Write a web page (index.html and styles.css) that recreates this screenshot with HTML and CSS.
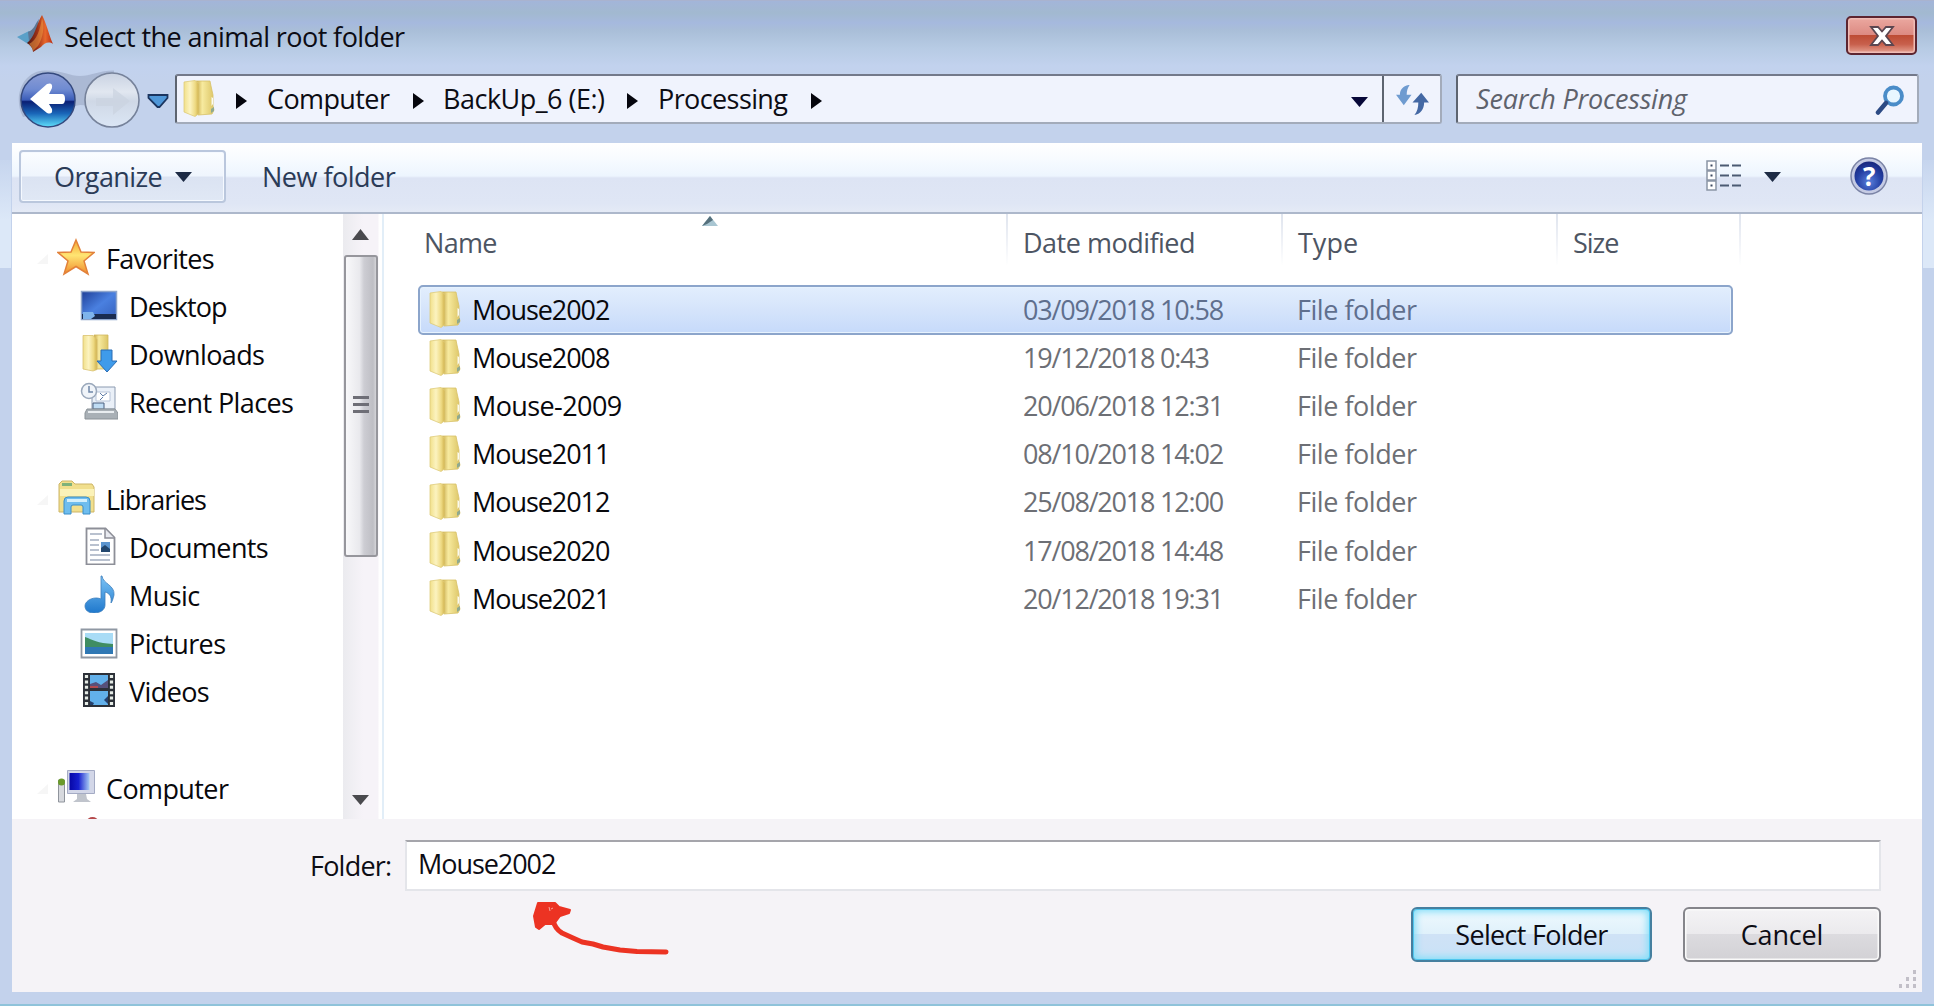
FILE: index.html
```html
<!DOCTYPE html>
<html lang="en">
<head>
<meta charset="utf-8">
<title>Select the animal root folder</title>
<link rel="stylesheet" href="styles.css">
</head>
<body>
<svg class="defs" width="0" height="0" aria-hidden="true">
  <defs>
    <linearGradient id="gLeaf" x1="0" x2="1"><stop offset="0" stop-color="#f1e08a"/><stop offset=".4" stop-color="#fcf3c0"/><stop offset=".75" stop-color="#eeda83"/><stop offset="1" stop-color="#cfb04c"/></linearGradient>
    <linearGradient id="gBack" x1="0" x2="1"><stop offset="0" stop-color="#c9a947"/><stop offset=".35" stop-color="#f7ea9f"/><stop offset="1" stop-color="#dcc566"/></linearGradient>
    <linearGradient id="gStar" x1="0" y1="0" x2="0" y2="1"><stop offset="0" stop-color="#f3a42e"/><stop offset=".45" stop-color="#ffe573"/><stop offset="1" stop-color="#f08c2c"/></linearGradient>
    <linearGradient id="gBlue" x1="0" y1="0" x2="1" y2="1"><stop offset="0" stop-color="#1e3f98"/><stop offset=".5" stop-color="#4a80e0"/><stop offset="1" stop-color="#3560bc"/></linearGradient>
    <linearGradient id="gSky" x1="0" y1="0" x2="0" y2="1"><stop offset="0" stop-color="#7cc4f6"/><stop offset="1" stop-color="#1f78cc"/></linearGradient>
    <linearGradient id="gOrb" x1="0" y1="0" x2="0" y2="1"><stop offset="0" stop-color="#8c9dd4"/><stop offset=".3" stop-color="#6f8bd2"/><stop offset=".5" stop-color="#3a5cb8"/><stop offset=".53" stop-color="#0a1f74"/><stop offset=".75" stop-color="#1a66b8"/><stop offset="1" stop-color="#5fe0fb"/></linearGradient>
    <linearGradient id="gOrbOff" x1="0" y1="0" x2="0" y2="1"><stop offset="0" stop-color="#c9d2e2"/><stop offset=".35" stop-color="#e1e7f0"/><stop offset=".52" stop-color="#cfd8e6"/><stop offset="1" stop-color="#dbe6f5"/></linearGradient>
    <linearGradient id="gScreen" x1="0" x2="1"><stop offset="0" stop-color="#0707a6"/><stop offset=".45" stop-color="#1720cf"/><stop offset="1" stop-color="#a9cdf4"/></linearGradient>
    <linearGradient id="gPeak" x1="0" x2="1"><stop offset="0" stop-color="#4f1712"/><stop offset=".4" stop-color="#9c3018"/><stop offset=".7" stop-color="#e8682c"/><stop offset="1" stop-color="#b92c12"/></linearGradient>
    <radialGradient id="gHelp" cx=".5" cy=".7" r=".7"><stop offset="0" stop-color="#5a80dc"/><stop offset=".6" stop-color="#2440a4"/><stop offset="1" stop-color="#18267c"/></radialGradient>
    <symbol id="folder" viewBox="0 0 34 38">
      <path d="M14 2h14l1 5 2 9v11l1 4-2 4-14 1z" fill="url(#gBack)" stroke="#d8c168" stroke-width=".8"/>
      <path d="M2 3 13 1.500l4 3v30l-4 3L2 33z" fill="url(#gLeaf)" stroke="#decb7b" stroke-width=".8"/>
      <path d="M29.500 18l1.500 1v6l-1.500 2z" fill="#fbfbf0"/><path d="M29 30l3-2v4l-3 2z" fill="#8fa98f"/>
    </symbol>
    <symbol id="expander" viewBox="0 0 14 12"><path d="M12 1v10H1z" fill="#f6f6f6"/></symbol>
    <symbol id="crumb" viewBox="0 0 11 16"><path d="M0 0 11 8 0 16z"/></symbol>
    <symbol id="drop" viewBox="0 0 17 10"><path d="M0 0h17L8.500 10z"/></symbol>
  </defs>
</svg>

<div class="window">
  <header class="titlebar">
    <svg class="app-icon" viewBox="0 0 38 38"><path d="M0 22 12 16l6 4-7 9z" fill="#5aa0c8"/><path d="M11 17c6-2 7-8 11-13l-3 16-7 6z" fill="#5d7594"/><path d="M10 28C18 22 19 10 25 0c4 7 7 20 11 29-4-3-9-1-12 3l-8 5c0-4-3-7-6-9z" fill="url(#gPeak)"/><path d="M25 3c3 8 1 20-4 28l-5 5c-1-4-2-5-4-7 8-4 11-14 13-26z" fill="#f4a043" opacity=".5"/></svg>
    <h1 class="title">Select the animal root folder</h1>
    <button class="close" aria-label="Close"><svg viewBox="0 0 26 22"><path d="M2 2h7l4 4.500 4-4.500h7l-7 9 7 9h-7l-4-4.500-4 4.500H2l7-9z" fill="#fff" stroke="#5b4650" stroke-width="1.800"/></svg></button>
  </header>

  <nav class="navbar">
    <svg class="orbs" viewBox="0 0 156 62">
      <path d="M30 1.500C48 1.500 55 7 65 7s20-5.500 34-5.500V40c-14 0-22-4-34-4L8 48C-2 30 6 2 30 1.500z" fill="#8d9cb8" opacity=".45"/>
      <circle cx="33" cy="31" r="27" fill="url(#gOrb)" stroke="#34497e" stroke-width="1.500"/>
      <path d="M15 30 32 15q6-2 5 4l-3 6h13q3 0 3 5t-3 5H34l3 5q1 6-5 4z" fill="#fff"/>
      <circle cx="97" cy="31" r="27" fill="url(#gOrbOff)" stroke="#76829a" stroke-width="1.600"/>
      <path d="M115 32 98 46v-9H81v-8h17V19z" fill="#cbd3df" opacity=".7"/>
      <path d="M133.500 26h19v3l-8 9h-2l-9-9z" fill="#4f97d8" stroke="#1b355f" stroke-width="1.800"/>
    </svg>
    <div class="address">
      <svg class="address-folder"><use href="#folder"/></svg>
      <svg class="crumb c1"><use href="#crumb"/></svg><span class="t-computer">Computer</span>
      <svg class="crumb c2"><use href="#crumb"/></svg><span class="t-drive">BackUp_6 (E:)</span>
      <svg class="crumb c3"><use href="#crumb"/></svg><span>Processing</span>
      <svg class="crumb c4"><use href="#crumb"/></svg>
      <svg class="drop address-drop"><use href="#drop"/></svg>
      <div class="refresh"><svg viewBox="0 0 34 32"><path d="M13 1c-6 1-9 5-9 10H0l8 11 8-11h-5c0-4 1-7 3-10z" fill="#6f9bd0"/><path d="M19 32c6-1 10-6 10-13h5L26 9l-9 10h6c0 5-1 9-4 13z" fill="#4468a4"/></svg></div>
    </div>
    <div class="search">
      <span class="placeholder">Search Processing</span>
      <svg class="lens" viewBox="0 0 30 30"><circle cx="18.500" cy="11" r="8.500" fill="#e8f6ff" stroke="#4a8cc8" stroke-width="3.800"/><path d="M11 18 3 27.500" stroke="#2c4a84" stroke-width="4.500" stroke-linecap="round"/></svg>
    </div>
  </nav>

  <div class="commands">
    <button class="organize">Organize<svg class="drop"><use href="#drop"/></svg></button>
    <span class="new-folder">New folder</span>
    <svg class="views" viewBox="0 0 35 32"><g fill="#fff" stroke="#8b95a5" stroke-width="1.500"><path d="M1 1h9v9H1zM1 11h9v9H1zM1 21h9v9H1z"/></g><path d="M4.500 4.500h2v2h-2zM4.500 14.500h2v2h-2zM4.500 24.500h2v2h-2z" fill="#3c4a60"/><path d="M14 5.500h9M26 5.500h9M14 15.500h9M26 15.500h9M14 25.500h9M26 25.500h9" stroke="#4b5a72" stroke-width="2.200"/></svg>
    <svg class="drop views-drop"><use href="#drop"/></svg>
    <div class="help"><svg viewBox="0 0 38 38"><circle cx="19" cy="19" r="18" fill="#c5cbe4" stroke="#7b84a6" stroke-width="1.500"/><circle cx="19" cy="19" r="14.500" fill="url(#gHelp)"/></svg><span>?</span></div>
  </div>

  <main class="body">
    <aside class="tree">
      <div class="node"><svg class="expander"><use href="#expander"/></svg><svg class="icon" viewBox="0 0 38 38"><path d="M19 2l5 12 13 .5-10 8.500 4 13-12-7.500L7 36l4-13L1 14.500 14 14z" fill="url(#gStar)" stroke="#e2813a" stroke-width="1.500"/></svg><span class="t-fav">Favorites</span></div>
      <div class="node child"><svg class="icon" viewBox="0 0 38 38"><path d="M1.500 5.500h35v28h-35z" fill="url(#gBlue)" stroke="#8fa6cc" stroke-width="1.500"/><path d="M2 28h34v5H2z" fill="#1a2c50"/><path d="M3 26h10l2 4-4 3H3z" fill="#7eb4ec"/></svg><span class="t-desk">Desktop</span></div>
      <div class="node child"><svg class="icon" viewBox="0 0 38 38"><path d="M14 1h14v34H14z" fill="url(#gBack)" stroke="#d2b75e" stroke-width=".8"/><path d="M3 1.500h10l4 4v30l-4 1.500-10-2z" fill="url(#gLeaf)" stroke="#d9c271" stroke-width=".8"/><path d="M21 16h11v11h5L27 38 17 27h4z" fill="#3f9bea" stroke="#2a6cb4"/></svg><span>Downloads</span></div>
      <div class="node child"><svg class="icon" viewBox="0 0 38 38"><path d="M12 5h23v22H12z" fill="#eaf0f8" stroke="#8b9ab0"/><path d="M16 10h14v9H16z" fill="#fff" stroke="#b7c4d8"/><path d="M20 11l3 3 4-3M20 18l3-3" stroke="#5b7ba6" fill="none"/><path d="M13 21h11v6H13z" fill="#bfdcf4" stroke="#4a5f7e"/><path d="M7 27h28l3 4v6H5v-6z" fill="#a9b0b6" stroke="#8b9298"/><path d="M8 30h26" stroke="#e9edf0" stroke-width="2"/><circle cx="9" cy="9" r="7.500" fill="#f0f4f9" stroke="#9aa8bb" stroke-width="1.500"/><path d="M9 4v6h4" fill="none" stroke="#6f87a8" stroke-width="1.500"/></svg><span>Recent Places</span></div>
      <div class="node gap"></div>
      <div class="node"><svg class="expander"><use href="#expander"/></svg><svg class="icon" viewBox="0 0 38 38"><path d="M2 5l3-3h10l3 3h17l2 3v25H2z" fill="#f1df8d" stroke="#cdb566"/><path d="M5 4h10v3H5z" fill="#7fb27a"/><path d="M3 10h34v7H3z" fill="#fbf2b8"/><path d="M7 35V22q0-4 4-4h18q4 0 4 4v13h-7v-7q0-2-2-2h-8q-2 0-2 2v7z" fill="#6fbdee" stroke="#3b8ec8"/><path d="M10 20h20v3H10z" fill="#d3effc"/></svg><span class="t-lib">Libraries</span></div>
      <div class="node child"><svg class="icon" viewBox="0 0 38 38"><path d="M6.500 1.500h19l9 9v27h-28z" fill="#fff" stroke="#8d8f98" stroke-width="1.800"/><path d="M25 2v9h9" fill="#e8eaf0" stroke="#8d8f98" stroke-width="1.500"/><path d="M10 7h12M10 13h9M10 18h9M10 23h9M10 28h20M10 33h20" stroke="#a3adc0" stroke-width="1.600"/><path d="M21 15h9v10h-9z" fill="#5c95cf"/><path d="M21 21l4-3 5 4v3h-9z" fill="#23476e"/></svg><span>Documents</span></div>
      <div class="node child"><svg class="icon" viewBox="0 0 38 38"><path d="M22 1c1 8 13 9 12 19-1 4-2 7-3 8 1-7-2-10-6-11v13c0 5-5 8-11 8S5 35 5 31s5-8 11-8c2 0 4 .5 5 1V1z" fill="url(#gSky)" stroke="#3d7fbd" stroke-width=".8"/></svg><span>Music</span></div>
      <div class="node child"><svg class="icon" viewBox="0 0 38 38"><path d="M1.500 6.500h35v28h-35z" fill="#fff" stroke="#8f98a3" stroke-width="1.800"/><path d="M5 10h28v21H5z" fill="#a9dcf6"/><path d="M5 14c8 3 12 6 28 7v4H5z" fill="#3f8d62"/><path d="M5 24h28v7H5z" fill="#2f78b4"/></svg><span>Pictures</span></div>
      <div class="node child"><svg class="icon" viewBox="0 0 38 38"><path d="M3 2h32v34H3z" fill="#2c3038"/><path d="M10 4h18v13H10zM10 20h18v14H10z" fill="#62b0ea"/><path d="M10 13l6-2 5 3 7-5v8H10z" fill="#56507a"/><path d="M10 15h8v2h-8z" fill="#b04a50"/><path d="M10 30l4 2-1 2h-3zM28 25l-4 4 4 4z" fill="#24406e"/><path d="M6.500 4v32M31.500 4v32" stroke="#e6ece6" stroke-width="3.200" stroke-dasharray="3 2.400"/></svg><span>Videos</span></div>
      <div class="node gap"></div>
      <div class="node"><svg class="expander"><use href="#expander"/></svg><svg class="icon" viewBox="0 0 38 38"><path d="M10.500 2.500h27v23h-27z" fill="#d3d7e8" stroke="#a4abc4"/><path d="M12.500 5h20v17h-20z" fill="url(#gScreen)"/><path d="M20 26h9l1 5 4 3H16l4-3z" fill="#c0c4cc"/><path d="M1.500 12h6v22h-6z" fill="#d7d9de" stroke="#8f949c"/><circle cx="4.500" cy="14" r="3.500" fill="#6a9a2a"/></svg><span>Computer</span></div>
      <div class="node child"><svg class="icon" viewBox="0 0 38 38"><ellipse cx="12.500" cy="5" rx="5.500" ry="4" fill="#b5494b"/></svg></div>
    </aside>
    <div class="scrollbar">
      <svg class="up" viewBox="0 0 17 11"><path d="M0 11 8.500 0 17 11z" fill="#4a4a4e"/></svg>
      <div class="thumb"><i></i><i></i><i></i></div>
      <svg class="down" viewBox="0 0 17 10"><path d="M0 0h17L8.500 10z" fill="#4a4a4e"/></svg>
    </div>
    <section class="files">
      <div class="row head"><span class="name">Name</span><span>Date modified</span><span class="type">Type</span><span class="size">Size</span><svg class="sort" viewBox="0 0 16 10"><path d="M0 10 8 0l8 10z" fill="#a9c6d2"/><path d="M0 10 8 0l3 4-6 4z" fill="#55707c"/></svg></div>
      <div class="row selected"><svg class="file-icon"><use href="#folder"/></svg><span class="name">Mouse2002</span><span class="date">03/09/2018 10:58</span><span class="kind">File folder</span></div>
      <div class="row"><svg class="file-icon"><use href="#folder"/></svg><span class="name">Mouse2008</span><span class="date">19/12/2018 0:43</span><span class="kind">File folder</span></div>
      <div class="row"><svg class="file-icon"><use href="#folder"/></svg><span class="name dashed">Mouse-2009</span><span class="date">20/06/2018 12:31</span><span class="kind">File folder</span></div>
      <div class="row"><svg class="file-icon"><use href="#folder"/></svg><span class="name">Mouse2011</span><span class="date">08/10/2018 14:02</span><span class="kind">File folder</span></div>
      <div class="row"><svg class="file-icon"><use href="#folder"/></svg><span class="name">Mouse2012</span><span class="date">25/08/2018 12:00</span><span class="kind">File folder</span></div>
      <div class="row"><svg class="file-icon"><use href="#folder"/></svg><span class="name">Mouse2020</span><span class="date">17/08/2018 14:48</span><span class="kind">File folder</span></div>
      <div class="row"><svg class="file-icon"><use href="#folder"/></svg><span class="name">Mouse2021</span><span class="date">20/12/2018 19:31</span><span class="kind">File folder</span></div>
    </section>
  </main>

  <footer class="footer">
    <div class="field"><label class="label">Folder:</label><div class="input">Mouse2002</div></div>
    <div class="actions"><button class="btn primary">Select Folder</button><button class="btn cancel">Cancel</button></div>
    <svg class="pointer" viewBox="0 0 140 54"><path d="M22 24C23 29 26 34 31 37L42 42 51 46 62 48 72 51 89 54 106 55.500 135 56" transform="translate(0 -4)" fill="none" stroke="#ec3323" stroke-width="5" stroke-linecap="round" stroke-linejoin="round"/><path d="M7 3 24 3 28 7 39 10 38 13 29 16 23 24 14 24 8 29 5 27 3 16z" fill="#ec3323" stroke="#ec3323" stroke-width="2" stroke-linejoin="round"/><path d="M18 7l1 4M22 8l-2 1" stroke="#f6a49c"/></svg>
    <svg class="grip" viewBox="0 0 20 20"><path d="M15 0h3v4h-3zM8 7h3v4H8zM15 7h3v4h-3zM1 14h3v4H1zM8 14h3v4H8zM15 14h3v4h-3z" fill="#c2bfc8"/></svg>
  </footer>
</div>
</body>
</html>
```
FILE: styles.css
```css
* { box-sizing: border-box; }

body {
  margin: 0;
  font: 27px/1 "Open Sans", "Noto Sans", sans-serif;
  letter-spacing: -0.6px;
  color: #0c0c14;
}

svg { display: block; flex: none; }
span, label, h1 { white-space: nowrap; }
button { font: inherit; letter-spacing: inherit; color: inherit; padding: 0; }
.defs { position: absolute; }

.window {
  display: flex;
  flex-direction: column;
  width: 1934px;
  height: 1006px;
  padding: 0 12px 14px;
  background:
    linear-gradient(#a9b3cf, #a9b3cf) 0 0 / 100% 1px no-repeat,
    linear-gradient(#8fc3da, #8fc3da) 0 100% / 100% 2px no-repeat,
    linear-gradient(#c6d5ee, #dce8f8 60px, #dce8f8) 0 160px / 11px 108px no-repeat,
    linear-gradient(#c6d5ee, #dce8f8 60px, #dce8f8) 100% 160px / 11px 108px no-repeat,
    linear-gradient(#a3b5da 0, #a2b9d0 13px, #a6b9de 23px, #a9bed8 30px, #b7cbe4 48px, #c2d2ee 66px, #c3d2ec 80px);
  overflow: hidden;
}

/* Title bar */
.titlebar { display: flex; align-items: center; height: 74px; padding: 0 5px; }
.app-icon { width: 38px; height: 38px; margin-top: -6px; }
.title { margin: -1px 0 0 9px; font-size: 27px; font-weight: 400; line-height: 38px; letter-spacing: -0.57px; }
.close {
  display: grid;
  place-items: center;
  width: 71px;
  height: 39px;
  margin: -3px 0 0 auto;
  border: 2px solid #5d2530;
  border-radius: 5px;
  background: linear-gradient(#eba8a0, #dc8a82 48%, #bd4c35 50%, #c8604c 75%, #e5a293);
  box-shadow: inset 0 0 0 1.5px #f0bdb6;
}
.close svg { width: 26px; height: 22px; }

/* Navigation */
.navbar { display: flex; height: 69px; padding-left: 3px; }
.orbs { width: 156px; height: 62px; margin-top: -5px; }
.address, .search {
  display: flex;
  align-items: center;
  height: 50px;
  border: 2px solid #a3abba;
  border-top-color: #73798a;
  border-left-color: #5d6470;
  border-radius: 3px;
  background: #f0f3fd;
}
.address { width: 1267px; margin-left: 4px; line-height: 46px; }
.address-folder { width: 34px; height: 38px; margin-left: 5px; margin-top: -3px; }
.crumb { width: 11px; height: 16px; fill: #05050d; margin-top: 3px; }
.c1 { margin-left: 20px; margin-right: 20px; }
.c2 { margin-left: 22px; margin-right: 19px; }
.c3 { margin-left: 22px; margin-right: 20px; }
.c4 { margin-left: 24px; }
.t-computer { width: 124px; }
.t-drive { width: 162px; letter-spacing: -0.5px; }
.drop { width: 17px; height: 10px; fill: #1d2b45; }
.address-drop { margin: 6px 14px 0 auto; fill: #070738; }
.refresh { display: grid; place-items: center; width: 58px; height: 46px; border-left: 2px solid #5d6470; }
.refresh svg { width: 33px; height: 31px; }
.search { width: 463px; margin-left: 14px; padding: 0 12px 0 18px; justify-content: space-between; }
.placeholder { line-height: 46px; font-style: italic; letter-spacing: -0.2px; color: #5e626c; }
.lens { width: 30px; height: 30px; margin-top: 2px; }

/* Command bar */
.commands {
  display: flex;
  align-items: center;
  height: 71px;
  padding: 0 35px 3px 7px;
  border-bottom: 2px solid #adb8cb;
  color: #2b3b57;
  background: linear-gradient(#fff, #f7fbff 16px, #edf5fe 33px, #dde4f4 35px, #dfe6f5 60px, #e4eaf6);
}
.organize {
  display: flex;
  align-items: center;
  gap: 13px;
  width: 207px;
  height: 53px;
  margin-top: 1px;
  padding-left: 33px;
  line-height: 47px;
  border: 2px solid #bac7dd;
  border-radius: 4px;
  background: linear-gradient(#fbfdff, #eff5fd 48%, #dbe3f2 52%, #e0e8f5);
  box-shadow: inset 0 0 0 1px #f5f9ff;
}
.new-folder { margin-left: 36px; line-height: 46px; letter-spacing: -0.5px; padding-top: 1px; }
.views { width: 35px; height: 32px; margin-left: auto; }
.views-drop { margin: 2px 69px 0 23px; }
.help { display: grid; place-items: center; width: 37px; height: 38px; }
.help > * { grid-area: 1 / 1; }
.help svg { width: 38px; height: 38px; }
.help span { z-index: 1; font-size: 26px; line-height: 38px; font-weight: 700; color: #fff; }

/* Body */
.body { display: flex; height: 605px; background: #fff; }
.tree { flex: none; width: 331px; height: 605px; padding-top: 21px; overflow: hidden; line-height: 48px; color: #08080c; }
.node { display: flex; align-items: center; height: 48.150px; padding-left: 24px; }
.node.child { padding-left: 68px; }
.expander { width: 14px; height: 12px; margin-right: 7px; }
.icon { width: 38px; height: 38px; margin-right: 11px; margin-top: -4px; }
.t-desk { letter-spacing: -0.95px; }
.t-lib { letter-spacing: -1.060px; }
.t-fav { letter-spacing: -0.7px; }

.scrollbar {
  flex: none;
  display: flex;
  flex-direction: column;
  align-items: center;
  width: 41px;
  padding: 15px 4px 14px 0;
  border-right: 2px solid #e2eef8;
  background: linear-gradient(90deg, #ebebef, #f6f3f8 20px, #f6f3f8 35px, #fff 36px);
}
.up { width: 17px; height: 11px; margin-bottom: 15px; }
.thumb {
  display: flex;
  flex-direction: column;
  justify-content: center;
  align-items: center;
  gap: 4px;
  width: 34px;
  height: 302px;
  padding-bottom: 3px;
  border: 2px solid #96969c;
  border-radius: 3px;
  background: linear-gradient(90deg, #f8f8fa, #e9e9ed 45%, #cdcdd3 60%, #bebec4 90%, #d4d4d8);
}
.thumb i { width: 16px; height: 3px; background: #6e6e76; }
.down { width: 17px; height: 10px; margin-top: auto; }

/* File list */
.files { flex: 1; min-width: 0; padding: 0 189px 0 34px; }
.row {
  display: grid;
  grid-template-columns: 44px 551px 274px 274px 1fr;
  align-items: center;
  height: 48.150px;
  padding-left: 10px;
  line-height: 46px;
  color: #6d6f75;
}
.row .name { color: #08080c; letter-spacing: -1.060px; }
.row .name.dashed { letter-spacing: -0.600px; }
.date { letter-spacing: -1.200px; }
.kind { letter-spacing: -0.460px; }
.file-icon { width: 34px; height: 38px; margin-top: -3px; }
.row.selected {
  height: 50px;
  margin-bottom: -1px;
  padding-left: 8px;
  border: 2px solid #8ca5cb;
  border-radius: 5px;
  color: #5f6f8e;
  background: linear-gradient(#e2eefd, #d5e4fb 50%, #c6dafa);
  box-shadow: inset 0 0 0 1px #e6f2fe;
}
.row.head {
  position: relative;
  grid-template-columns: 590px 275px 275px 1fr;
  width: 1326px;
  height: 71px;
  padding: 0 0 13px;
  color: #4d5563;
  background:
    linear-gradient(#dfe4ee, #fff) 588px 0 / 2px 52px no-repeat,
    linear-gradient(#dfe4ee, #fff) 863px 0 / 2px 52px no-repeat,
    linear-gradient(#dfe4ee, #fff) 1138px 0 / 2px 52px no-repeat,
    linear-gradient(#dfe4ee, #fff) 1321px 0 / 2px 52px no-repeat;
}
.row.head .name { padding-left: 6px; color: inherit; letter-spacing: -0.700px; }
.row.head span + span { padding-left: 15px; letter-spacing: -0.500px; }
.row.head .type { letter-spacing: 0; }
.row.head .size { letter-spacing: -1px; }
.sort { position: absolute; left: 284px; top: 2px; width: 16px; height: 10px; }

/* Footer */
.footer { position: relative; height: 173px; padding: 21px 41px 0 0; background: #f5f3f7; }
.field { display: flex; align-items: center; }
.label { width: 393px; padding-left: 298px; line-height: 50px; padding-top: 1px; letter-spacing: -0.780px; }
.input {
  flex: 1;
  height: 51px;
  padding: 0 0 0 11px;
  line-height: 44px;
  border: 2px solid #e4e5ea;
  border-top-color: #a5a5ab;
  background: #fff;
  letter-spacing: -1.060px;
}
.actions { display: flex; justify-content: flex-end; gap: 31px; margin-top: 16px; }
.btn { height: 55px; line-height: 47px; border: 2px solid #85858b; border-radius: 6px; }
.cancel {
  width: 198px;
  letter-spacing: -0.150px;
  background: linear-gradient(#f4f3f5, #ebeaed 48%, #dcdbdf 50%, #d2d1d5);
  box-shadow: inset 0 0 0 1.500px #fafafa;
}
.primary {
  width: 241px;
  letter-spacing: -0.680px;
  border-color: #467f9f;
  background: linear-gradient(#eef9fe, #e0f1fb 48%, #cfe2f6 50%, #c9e2f7);
  box-shadow: inset 0 0 0 1px #4fc6ee, inset 0 0 7px 3px #86def8;
}
.pointer { position: absolute; left: 519px; top: 81px; width: 140px; height: 54px; overflow: visible; }
.grip { position: absolute; right: 4px; bottom: 2px; width: 20px; height: 20px; }
```
